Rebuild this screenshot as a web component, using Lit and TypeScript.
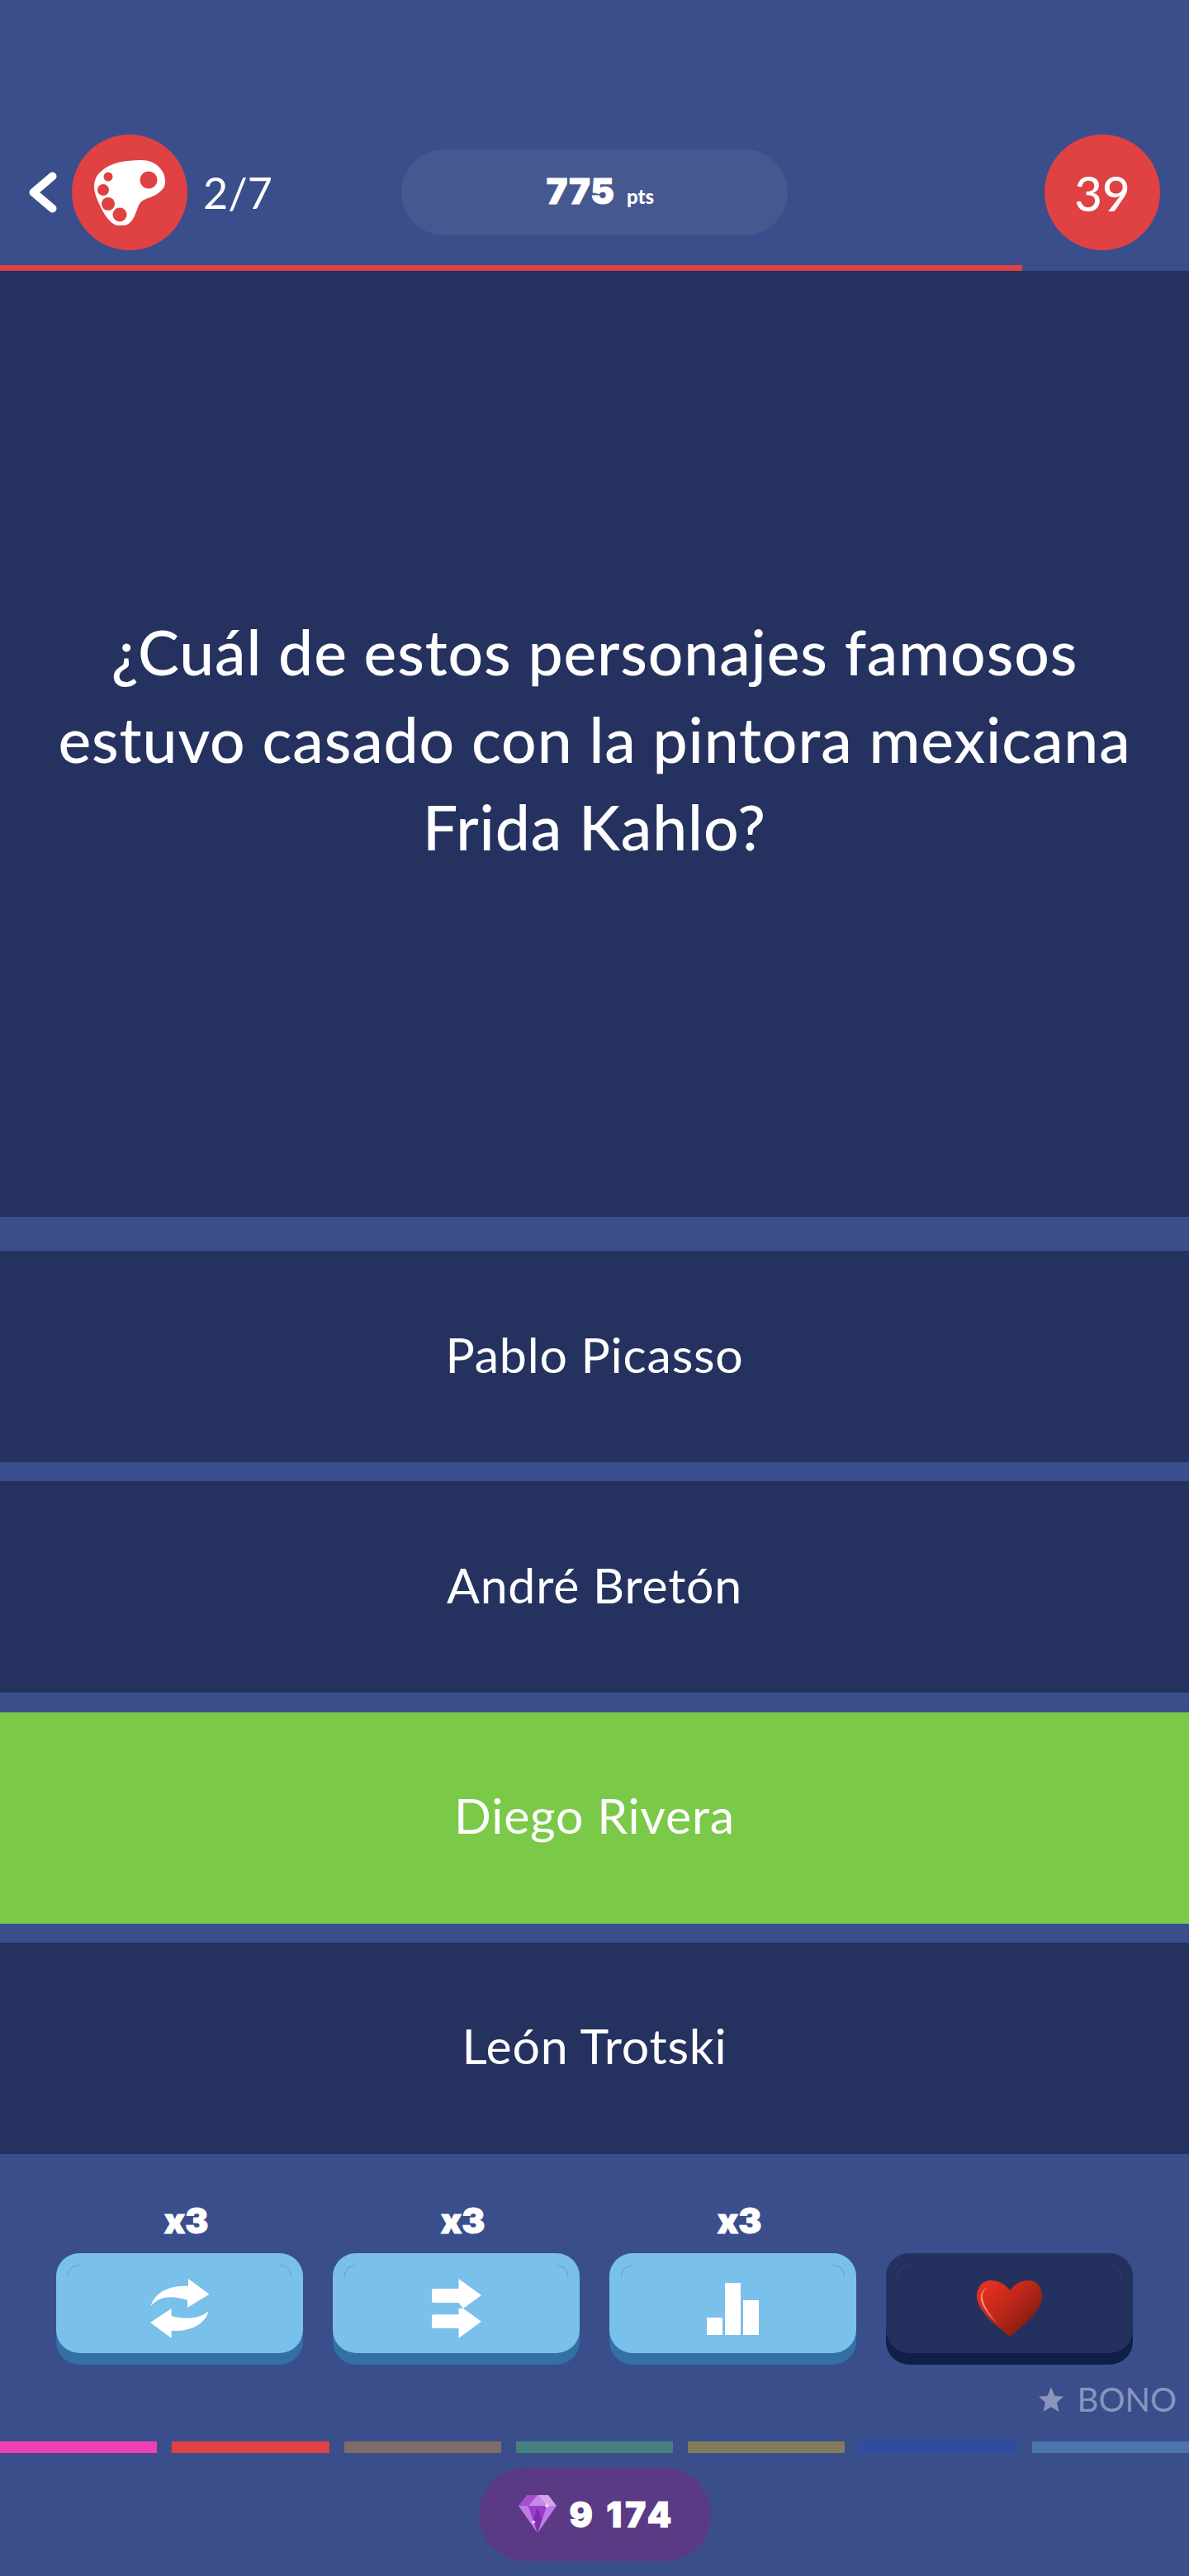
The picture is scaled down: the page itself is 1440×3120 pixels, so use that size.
import { LitElement, html, css } from "lit";
import { customElement } from "lit/decorators.js";

const shuffleIcon = html`<svg viewBox="0 0 72 72" width="72" height="72"><path fill="#fff" d="M71.500 18.700 46 0v8.700C22 8 6 16 .4 33.300 10 22 24 19 45 26v9z"/><path fill="#fff" d="M0 53 25.600 36v9c18 5 36 3 44.900-6C66 56 48 64 25.600 63v9z"/></svg>`;
const skipIcon = html`<svg viewBox="0 0 60 72" width="60" height="72"><path fill="#fff" d="M2 12h30.500V0L60 20 38 36 60 51.700 32.500 72V60H2a2 2 0 0 1-2-2V45.300a2 2 0 0 1 2-2h30.500V36L38 36 32.500 29H2a2 2 0 0 1-2-2V14a2 2 0 0 1 2-2z"/></svg>`;
const barsIcon = html`<svg viewBox="0 0 63 63" width="63" height="63"><path fill="#fff" d="M0 42h19v21H0zM22 0h19v63H22zM44 21h19v42H44z"/></svg>`;

@customElement("app-root")
export class AppRoot extends LitElement {
  static styles = css`
    :host { display: block; width: 1440px; height: 3120px; background: #3a4e8c; color: #fff; font-family: Lato, "Noto Sans", sans-serif; overflow: hidden; }
    .header { display: grid; grid-template-columns: 486px 468px 1fr; align-items: center; padding: 163px 35px 18px 0; height: 140px; }
    .left { display: flex; align-items: center; padding-left: 35px; }
    .back { width: 34px; height: 50px; display: block; flex: none; }
    .cat { width: 140px; height: 140px; border-radius: 50%; background: #e04142; margin-left: 18px; display: flex; align-items: center; justify-content: center; flex: none; }
    .count { font-size: 52px; font-weight: 400; margin-left: 19px; line-height: 1; }
    .pill { height: 104px; border-radius: 52px; background: #465890; display: flex; align-items: baseline; justify-content: center; gap: 14px; line-height: 100px; padding-left: 14px; box-sizing: border-box; }
    .pts { font-family: Inter, sans-serif; font-size: 43px; font-weight: 900; -webkit-text-stroke: 1px #fff; letter-spacing: 1px; }
    .ptsu { font-family: Lato, sans-serif; font-size: 24px; font-weight: 900; }
    .timer { justify-self: end; width: 140px; height: 140px; border-radius: 50%; background: #e04142; display: flex; align-items: center; justify-content: center; font-size: 58px; font-weight: 500; }
    .progress { height: 7px; width: 1238px; background: #e04142; }
    .question { height: 1146px; background: #25315f; display: flex; align-items: center; justify-content: center; text-align: center; font-size: 75px; letter-spacing: 0.9px; line-height: 106px; font-weight: 500; margin-bottom: 41px; padding-bottom: 12px; box-sizing: border-box; }
    .answers { display: flex; flex-direction: column; gap: 23.3px; }
    .answer { height: 256px; background: #25315f; display: flex; align-items: center; justify-content: center; font-size: 59px; letter-spacing: 0.8px; padding-bottom: 6px; box-sizing: border-box; }
    .answer.ok { background: #7bc948; }
    .tools { display: grid; grid-template-columns: repeat(4, 299px); gap: 36px; padding: 61px 0 0 68px; }
    .tool { display: flex; flex-direction: column; align-items: center; }
    .x { height: 59px; font-family: Inter, sans-serif; font-weight: 900; font-size: 42px; line-height: 40px; padding-left: 16px; -webkit-text-stroke: 1px #fff; }
    .btn { width: 100%; height: 121px; border-radius: 28px; background: #79c0eb; box-shadow: 0 14px 0 #3370a5; display: flex; align-items: center; justify-content: center; position: relative; padding-top: 14px; box-sizing: border-box; }
    .btn::before, .btn::after { content: ""; position: absolute; top: 14px; width: 14px; height: 14px; border-top: 1px solid rgba(51,112,165,.35); }
    .btn::before { left: 14px; border-left: 1px solid rgba(51,112,165,.35); border-top-left-radius: 14px; }
    .btn::after { right: 14px; border-right: 1px solid rgba(51,112,165,.35); border-top-right-radius: 14px; }
    .btn.dark { background: #24315f; box-shadow: 0 14px 0 #121e4a; }
    .btn.dark::before, .btn.dark::after { border-color: rgba(255,255,255,.06); }
    .bono { display: flex; justify-content: flex-end; align-items: center; gap: 17px; padding: 36px 15px 0 0; color: #8a95bd; font-size: 40px; line-height: 40px; }
    .strip { display: flex; gap: 18px; margin-top: 31px; height: 14px; }
    .strip div { flex: 1; }
    .gems { width: 281px; height: 113px; border-radius: 56px; background: #5a3a84; margin: 18px auto 0; display: flex; align-items: center; gap: 16px; padding-left: 48px; box-sizing: border-box; font-family: Inter, sans-serif; font-weight: 900; font-size: 42px; letter-spacing: 4px; -webkit-text-stroke: 1px #fff; }
  `;

  render() {
    const answers = ["Pablo Picasso", "André Bretón", "Diego Rivera", "León Trotski"];
    const strip = ["#ee3fb5", "#e04142", "#7f6b68", "#46807e", "#827c5c", "#2e4da0", "#4d74ac"];
    return html`
      <div class="header">
        <div class="left">
          <svg class="back" viewBox="0 0 34 50"><path d="M28.500 5.500 5.500 25l23 19.500" fill="none" stroke="#fff" stroke-width="10" stroke-linecap="round" stroke-linejoin="round"/></svg>
          <div class="cat">
            <svg viewBox="114 193 86 79" width="86" height="79">
              <path fill="#fff" d="M172 193C188 193 200 205 200 218C200 223 199 226 197 228C192 234 185 237 177 240C171 242 169 245 167 250C164 258 161 268 154 271C150 273 143 273 139 271C132 267 127 260 123 252C118 242 114 232 114 226C114 219 116 212 122 207C130 199 142 195 155 194C161 193 166 193 172 193Z"/>
              <g fill="#e04142"><circle cx="180" cy="217" r="10.500"/><circle cx="131" cy="213" r="5.500"/><circle cx="125" cy="229" r="7"/><circle cx="131" cy="246" r="8"/><circle cx="145" cy="259" r="8.500"/></g>
            </svg>
          </div>
          <span class="count">2/7</span>
        </div>
        <div class="pill"><span class="pts">775</span><span class="ptsu">pts</span></div>
        <div class="timer">39</div>
      </div>
      <div class="progress"></div>
      <div class="question"><div>¿Cuál de estos personajes famosos<br>estuvo casado con la pintora mexicana<br>Frida Kahlo?</div></div>
      <div class="answers">${answers.map((a, i) => html`<div class="answer ${i === 2 ? "ok" : ""}">${a}</div>`)}</div>
      <div class="tools">
        <div class="tool"><div class="x">x3</div><div class="btn">${shuffleIcon}</div></div>
        <div class="tool"><div class="x">x3</div><div class="btn">${skipIcon}</div></div>
        <div class="tool"><div class="x">x3</div><div class="btn">${barsIcon}</div></div>
        <div class="tool"><div class="x"></div><div class="btn dark">
          <svg viewBox="0 0 79 68" width="79" height="68">
            <defs><linearGradient id="h" x1="0.1" y1="0.1" x2="0.9" y2="0.8"><stop offset="0" stop-color="#e6301f"/><stop offset=".5" stop-color="#bc2719"/><stop offset="1" stop-color="#7c1b10"/></linearGradient></defs>
            <path fill="url(#h)" d="M40 12C34 4 26 0 17 0 7 0 0 8 0 19 0 36 20 52 40 68 60 52 79 36 79 19 79 8 72 0 63 0 54 0 46 4 40 12Z"/>
            <path fill="#ee9a90" d="M12 9c-4 3-6 8-5 13 2 10 9 20 17 29-9-8-17-18-19-28-1-6 2-12 7-14z"/>
          </svg>
        </div></div>
      </div>
      <div class="bono"><svg viewBox="0 0 24 24" width="30" height="30"><path fill="#8a95bd" d="M12 0l3.500 8.500 8.500.8-6.400 5.800 2 9L12 19.400 4.400 24l2-9L0 9.300l8.500-.8z"/></svg><span>BONO</span></div>
      <div class="strip">${strip.map((c) => html`<div style="background:${c}"></div>`)}</div>
      <div class="gems">
        <svg viewBox="0 0 46 46" width="46" height="46">
          <path fill="#a34fd0" d="M10 0h13L12 13H0z"/><path fill="#c689e4" d="M12 13 23 0l11 13z"/><path fill="#d9a3ec" d="M23 0h13l10 13H34z"/>
          <path fill="#c17ae8" d="M0 13h12l11 33z"/><path fill="#c17ae8" d="M34 13h12L23 46z"/><path fill="#9a3fcc" d="M12 13h22L23 46z"/><path fill="#7f2db0" d="M23 15l5 14-5 17-5-17z"/>
          <path fill="#fff" d="M34.300 10l.8 2.300 2.300.7-2.300.7-.8 2.300-.8-2.300-2.300-.7 2.300-.7zM18.300 30l.7 2 2 .7-2 .7-.7 2-.7-2-2-.7 2-.7z"/>
        </svg>
        <span>9 174</span>
      </div>
    `;
  }
}
